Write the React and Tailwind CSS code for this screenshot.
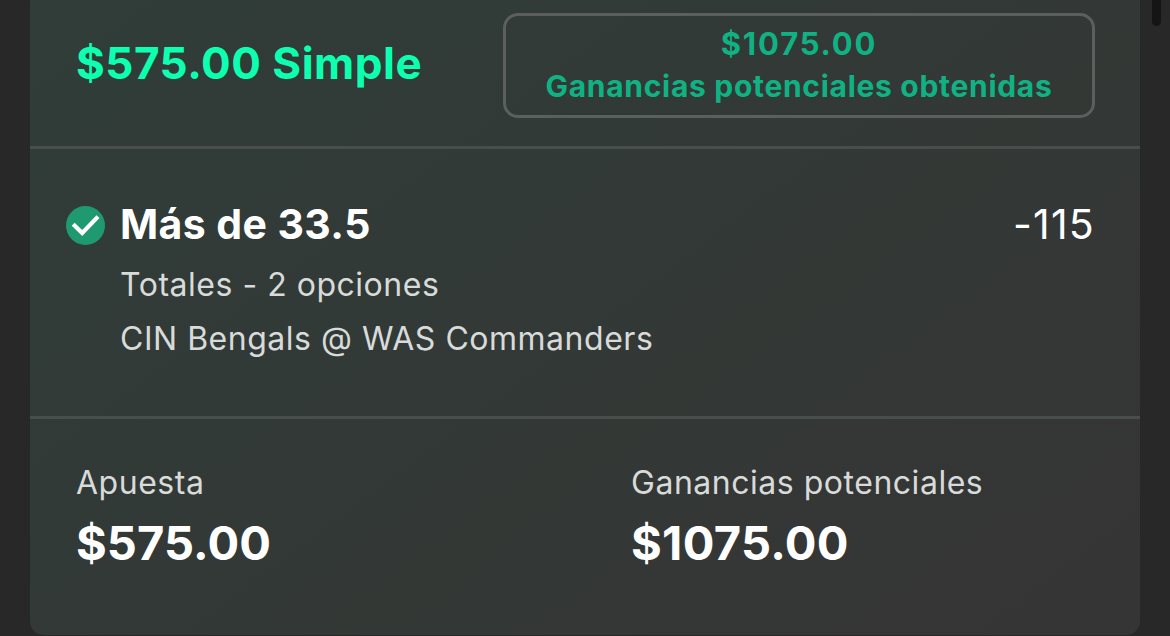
export default function App() {
  return (
    <div className="flex h-[636px] w-[1170px] overflow-hidden bg-[#282828] pl-[30px] font-['Inter','Liberation_Sans',sans-serif] whitespace-nowrap">
      <main className="flex h-[635px] w-[1110px] flex-col rounded-b-[14px] bg-[linear-gradient(143deg,#303d38_0%,#323936_45%,#343735_72%,#353535_95%)]">
        <header className="flex h-[149px] items-start justify-between border-b-[3px] border-[#484e4c] pt-[13px] pr-[45px] pl-[46px]">
          <h1 className="mt-[20px] text-[44px] leading-[60px] font-[650] tracking-[0.5px] text-[#0dffb0]">$575.00 Simple</h1>
          <div className="flex h-[105px] w-[592px] flex-col items-center rounded-[15px] border-[3px] border-[#5b605e] pt-[6px] font-[650] text-[#10b283]">
            <div className="text-[31px] leading-[44px] tracking-[1.8px]">$1075.00</div>
            <div className="-mt-px text-[30px] leading-[42px] tracking-[0.7px]">Ganancias potenciales obtenidas</div>
          </div>
        </header>
        <section className="flex h-[270px] items-start border-b-[3px] border-[#484e4c] pt-[50px] pr-[45px] pl-[36px]">
          <svg className="mt-[7px] h-[39px] w-[39px] shrink-0" viewBox="0 0 39 39" fill="none">
            <circle cx="19.5" cy="19.5" r="19.5" fill="#1f9a70" />
            <path d="M7.2 18.2 16.2 27 32 10.6" stroke="#fff" strokeWidth="4.2" />
          </svg>
          <div className="ml-[15px] flex-1 text-[32px] tracking-[0.52px] text-[#d8dbda]">
            <h2 className="-mt-px text-[41px] leading-[52px] font-bold tracking-[0.4px] text-white">Más de 33.5</h2>
            <p className="mt-[8px] leading-[54px]">Totales - 2 opciones</p>
            <p className="leading-[54px]">CIN Bengals @ WAS Commanders</p>
          </div>
          <div className="-mt-px text-[41px] leading-[52px] tracking-[1.2px] text-white">-115</div>
        </section>
        <footer className="grid grid-cols-[555px_1fr] pt-[43px] pl-[46px]">
          <div>
            <div className="text-[32px] leading-[42px] tracking-[0.52px] text-[#d8dbda]">Apuesta</div>
            <div className="mt-[11px] text-[47px] leading-[56px] font-bold tracking-[0.1px] text-white">$575.00</div>
          </div>
          <div>
            <div className="text-[32px] leading-[42px] tracking-[0.52px] text-[#d8dbda]">Ganancias potenciales</div>
            <div className="mt-[11px] text-[47px] leading-[56px] font-bold tracking-[0.3px] text-white">$1075.00</div>
          </div>
        </footer>
      </main>
      <div className="ml-[12px] h-[26px] w-[9px] rounded-b-[5px] bg-[#151515]" />
    </div>
  );
}
